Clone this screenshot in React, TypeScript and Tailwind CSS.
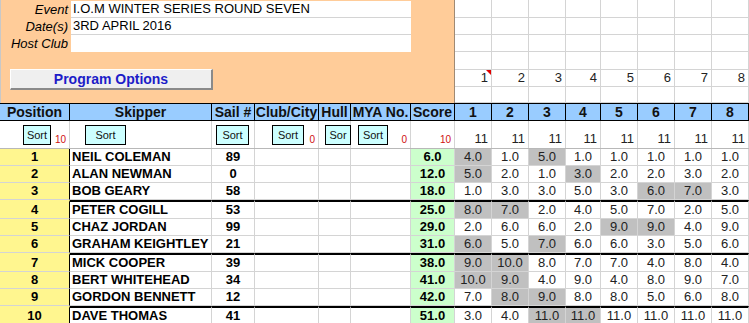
import React from "react";

type Row = {
  pos: number;
  name: string;
  sail: number;
  score: string;
  races: string[];
  shaded: number[];
  thick?: boolean;
};

const ROWS: Row[] = [
  { pos: 1, name: "NEIL COLEMAN", sail: 89, score: "6.0", races: ["4.0", "1.0", "5.0", "1.0", "1.0", "1.0", "1.0", "1.0"], shaded: [0, 2] },
  { pos: 2, name: "ALAN NEWMAN", sail: 0, score: "12.0", races: ["5.0", "2.0", "1.0", "3.0", "2.0", "2.0", "3.0", "2.0"], shaded: [0, 3] },
  { pos: 3, name: "BOB GEARY", sail: 58, score: "18.0", races: ["1.0", "3.0", "3.0", "5.0", "3.0", "6.0", "7.0", "3.0"], shaded: [5, 6] },
  { pos: 4, name: "PETER COGILL", sail: 53, score: "25.0", races: ["8.0", "7.0", "2.0", "4.0", "5.0", "7.0", "2.0", "5.0"], shaded: [0, 1], thick: true },
  { pos: 5, name: "CHAZ JORDAN", sail: 99, score: "29.0", races: ["2.0", "6.0", "6.0", "2.0", "9.0", "9.0", "4.0", "9.0"], shaded: [4, 5] },
  { pos: 6, name: "GRAHAM KEIGHTLEY", sail: 21, score: "31.0", races: ["6.0", "5.0", "7.0", "6.0", "6.0", "3.0", "5.0", "6.0"], shaded: [0, 2] },
  { pos: 7, name: "MICK COOPER", sail: 39, score: "38.0", races: ["9.0", "10.0", "8.0", "7.0", "7.0", "4.0", "8.0", "4.0"], shaded: [0, 1], thick: true },
  { pos: 8, name: "BERT WHITEHEAD", sail: 34, score: "41.0", races: ["10.0", "9.0", "4.0", "9.0", "4.0", "8.0", "9.0", "7.0"], shaded: [0, 1] },
  { pos: 9, name: "GORDON BENNETT", sail: 12, score: "42.0", races: ["7.0", "8.0", "9.0", "8.0", "8.0", "5.0", "6.0", "8.0"], shaded: [1, 2] },
  { pos: 10, name: "DAVE THOMAS", sail: 41, score: "51.0", races: ["3.0", "4.0", "11.0", "11.0", "11.0", "11.0", "11.0", "11.0"], shaded: [2, 3], thick: true },
];

const RACES = [1, 2, 3, 4, 5, 6, 7, 8];
const TABLE_COLS =
  "grid grid-cols-[70px_142px_43px_64px_32px_60px_44px_37px_37px_37px_35px_37px_37px_37px_37px]";

function SortButton({ width, label = "Sort" }: { width: string; label?: string }) {
  return (
    <span
      className={`${width} flex h-[20px] items-center justify-center overflow-hidden border border-black bg-[#ccffff] text-[11px] leading-none text-[#111]`}
    >
      {label}
    </span>
  );
}

function Count({ value }: { value: string }) {
  return <span className="ml-auto mb-[1px] pr-[3px] text-[10px] leading-none text-[#d01010]">{value}</span>;
}

export default function App() {
  return (
    <div className="h-[323px] w-[749px] overflow-hidden bg-white font-['Liberation_Sans',Arial,sans-serif] text-[13px] text-black">
      {/* event panel + empty sheet cells */}
      <div className="flex h-[103px]">
        <div className="w-[455px] border-r border-r-[#a08a74] border-l border-l-[#c8c8c8] bg-[#ffcc99]">
          <div className="pt-[1px]">
            {[
              ["Event", "I.O.M WINTER SERIES ROUND SEVEN"],
              ["Date(s)", "3RD APRIL 2016"],
              ["Host Club", ""],
            ].map(([label, value], i) => (
              <div key={label} className={`flex ${i === 0 ? "h-[17px]" : "h-[17px]"}`}>
                <div className="w-[70px] pr-[3px] text-right italic leading-[17px]">{label}</div>
                <div
                  className={`w-[340px] bg-white pl-[2px] leading-[16px] ${i < 2 ? "border-b border-[#d4d4d4]" : ""}`}
                >
                  {value}
                </div>
              </div>
            ))}
          </div>
          <button
            type="button"
            className="ml-[9px] mt-[17px] h-[21px] w-[203px] border-t border-l border-t-white border-l-white border-r-2 border-b-2 border-r-[#8a8a8a] border-b-[#8a8a8a] bg-[#efefef] text-[14px] font-bold leading-none text-[#1c1cc8]"
          >
            Program Options
          </button>
        </div>
        <div className="grid flex-1 grid-cols-[37px_37px_37px_35px_37px_37px_37px_37px] grid-rows-[18px_17px_17px_18px_17px_16px]">
          {Array.from({ length: 6 }).flatMap((_, r) =>
            RACES.map((n) => (
              <div
                key={`${r}-${n}`}
                className="relative border-r border-b border-[#d4d4d4] pr-[3px] text-right leading-[16px] text-[#222]"
              >
                {r === 4 ? n : ""}
                {r === 4 && n === 1 && (
                  <span className="absolute top-0 right-0 h-0 w-0 border-t-[5px] border-l-[5px] border-t-[#e00000] border-l-transparent" />
                )}
              </div>
            ))
          )}
        </div>
      </div>

      {/* column headings */}
      <div className={`${TABLE_COLS} h-[18px] border-y border-black bg-[#99ccff] text-[14px] font-bold leading-[16px] text-[#111]`}>
        {["Position", "Skipper", "Sail #", "Club/City", "Hull", "MYA No.", "Score"].map((h) => (
          <div key={h} className="overflow-hidden whitespace-nowrap border-r border-black text-center">
            {h}
          </div>
        ))}
        {RACES.map((n) => (
          <div key={n} className="border-r border-black text-center">
            {n}
          </div>
        ))}
      </div>

      {/* sort buttons */}
      <div className={`${TABLE_COLS} h-[28px] border-b border-[#b8b8b8]`}>
        <div className="flex items-end border-r border-[#d4d4d4] pb-[2px]">
          <span className="mb-[1px] ml-[23px]"><SortButton width="w-[28px]" /></span>
          <Count value="10" />
        </div>
        <div className="flex items-end border-r border-[#d4d4d4] pb-[3px]">
          <span className="ml-[15px]"><SortButton width="w-[41px]" /></span>
        </div>
        <div className="flex items-end border-r border-[#d4d4d4] pb-[3px]">
          <span className="ml-[4px]"><SortButton width="w-[33px]" /></span>
        </div>
        <div className="flex items-end border-r border-[#d4d4d4] pb-[2px]">
          <span className="mb-[1px] ml-[17px]"><SortButton width="w-[32px]" /></span>
          <Count value="0" />
        </div>
        <div className="flex items-end border-r border-[#d4d4d4] pb-[3px]">
          <span className="ml-[6px]"><SortButton width="w-[26px]" label="Sor" /></span>
        </div>
        <div className="flex items-end border-r border-[#d4d4d4] pb-[2px]">
          <span className="mb-[1px] ml-[7px]"><SortButton width="w-[30px]" /></span>
          <Count value="0" />
        </div>
        <div className="flex items-end border-r border-[#d4d4d4] pb-[2px]">
          <Count value="10" />
        </div>
        {RACES.map((n) => (
          <div key={n} className="flex items-end justify-end border-r border-[#d4d4d4] pr-[3px] pb-[1px] leading-[16px] text-[#222]">
            11
          </div>
        ))}
      </div>

      {/* results */}
      {ROWS.map((row) => {
        const top = row.thick ? "border-t-2 border-t-black" : "";
        const cell = `border-r border-b border-[#d4d4d4] ${top}`;
        return (
          <div key={row.pos} className={`${TABLE_COLS} ${row.thick ? "h-[19px]" : "h-[17px]"} font-bold leading-[15px]`}>
            <div
              className={`border-r border-r-black border-b border-b-[#d4d4d4] bg-[#fff68f] text-center ${row.thick ? "border-t-2 border-t-[#fff68f]" : ""}`}
            >
              {row.pos}
            </div>
            <div className={`${cell} overflow-hidden whitespace-nowrap pl-[2px]`}>{row.name}</div>
            <div className={`${cell} text-center`}>{row.sail}</div>
            <div className={cell} />
            <div className={cell} />
            <div className={cell} />
            <div className={`${cell} bg-[#ccffcc] text-center`}>{row.score}</div>
            {row.races.map((v, i) => (
              <div
                key={i}
                className={`${cell} text-center font-normal text-[#222] ${row.shaded.includes(i) ? "bg-[#c0c0c0]" : ""}`}
              >
                {v}
              </div>
            ))}
          </div>
        );
      })}
    </div>
  );
}
